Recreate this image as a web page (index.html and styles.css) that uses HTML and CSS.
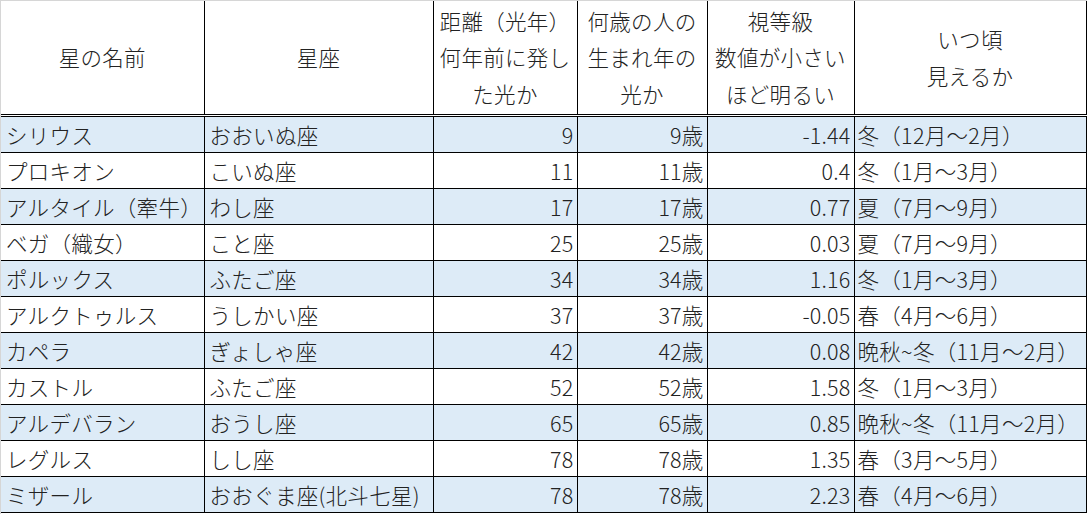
FILE: index.html
```html
<!DOCTYPE html>
<html lang="ja">
<head>
<meta charset="utf-8">
<title>星の一覧</title>
<link rel="stylesheet" href="styles.css">
</head>
<body>
<div class="sheet">
<table class="stars">
  <colgroup>
    <col class="c-name">
    <col class="c-const">
    <col class="c-dist">
    <col class="c-age">
    <col class="c-mag">
    <col class="c-when">
  </colgroup>
  <thead>
    <tr>
      <th>星の名前</th>
      <th>星座</th>
      <th>距離（光年）<br>何年前に発し<br>た光か</th>
      <th>何歳の人の<br>生まれ年の<br>光か</th>
      <th>視等級<br>数値が小さい<br>ほど明るい</th>
      <th>いつ頃<br>見えるか</th>
    </tr>
  </thead>
  <tbody>
    <tr class="alt"><td>シリウス</td><td>おおいぬ座</td><td class="num">9</td><td class="num">9歳</td><td class="num">-1.44</td><td>冬（12月～2月）</td></tr>
    <tr><td>プロキオン</td><td>こいぬ座</td><td class="num">11</td><td class="num">11歳</td><td class="num">0.4</td><td>冬（1月～3月）</td></tr>
    <tr class="alt"><td>アルタイル（牽牛）</td><td>わし座</td><td class="num">17</td><td class="num">17歳</td><td class="num">0.77</td><td>夏（7月～9月）</td></tr>
    <tr><td>ベガ（織女）</td><td>こと座</td><td class="num">25</td><td class="num">25歳</td><td class="num">0.03</td><td>夏（7月～9月）</td></tr>
    <tr class="alt"><td>ポルックス</td><td>ふたご座</td><td class="num">34</td><td class="num">34歳</td><td class="num">1.16</td><td>冬（1月～3月）</td></tr>
    <tr><td>アルクトゥルス</td><td>うしかい座</td><td class="num">37</td><td class="num">37歳</td><td class="num">-0.05</td><td>春（4月～6月）</td></tr>
    <tr class="alt"><td>カペラ</td><td>ぎょしゃ座</td><td class="num">42</td><td class="num">42歳</td><td class="num">0.08</td><td>晩秋~冬（11月～2月）</td></tr>
    <tr><td>カストル</td><td>ふたご座</td><td class="num">52</td><td class="num">52歳</td><td class="num">1.58</td><td>冬（1月～3月）</td></tr>
    <tr class="alt"><td>アルデバラン</td><td>おうし座</td><td class="num">65</td><td class="num">65歳</td><td class="num">0.85</td><td>晩秋~冬（11月～2月）</td></tr>
    <tr><td>レグルス</td><td>しし座</td><td class="num">78</td><td class="num">78歳</td><td class="num">1.35</td><td>春（3月～5月）</td></tr>
    <tr class="alt"><td>ミザール</td><td>おおぐま座(北斗七星)</td><td class="num">78</td><td class="num">78歳</td><td class="num">2.23</td><td>春（4月～6月）</td></tr>
  </tbody>
</table>
</div>
</body>
</html>
```

FILE: styles.css
```css
html, body {
  margin: 0;
  padding: 0;
  background: #ffffff;
}

.sheet {
  border-top: 1px solid #d6d6d6;
  border-left: 1px solid #d6d6d6;
  width: 1086px;
  height: 513px;
  overflow: hidden;
}

.stars {
  border-collapse: collapse;
  table-layout: fixed;
  width: 1085px;
  font-family: "Noto Sans CJK JP", "Noto Sans", sans-serif;
  font-size: 21.5px;
  font-weight: 300;
  letter-spacing: 0.3px;
  color: #222222;
}

.c-name { width: 203px; }
.c-const { width: 229px; }
.c-dist { width: 144px; }
.c-age { width: 130px; }
.c-mag { width: 147px; }
.c-when { width: 232px; }

.stars th {
  font-weight: 300;
  height: 113px;
  line-height: 36.5px;
  text-align: center;
  vertical-align: middle;
  padding: 0;
  border-left: 1px solid #000;
  border-right: 1px solid #000;
  border-bottom: 3px double #000;
  white-space: nowrap;
}

.stars th:first-child {
  border-left: none;
}

.stars td {
  height: 35px;
  padding: 0 4px 0 5px;
  line-height: 35px;
  border: 1px solid #000;
  white-space: nowrap;
  overflow: hidden;
  vertical-align: middle;
}

.stars td:first-child {
  border-left: none;
}

.stars td:last-child {
  padding-left: 3px;
}

.stars td.num {
  text-align: right;
  padding-right: 3px;
  letter-spacing: 0.2px;
}

.stars tr.alt td {
  background: #ddebf7;
}
```
